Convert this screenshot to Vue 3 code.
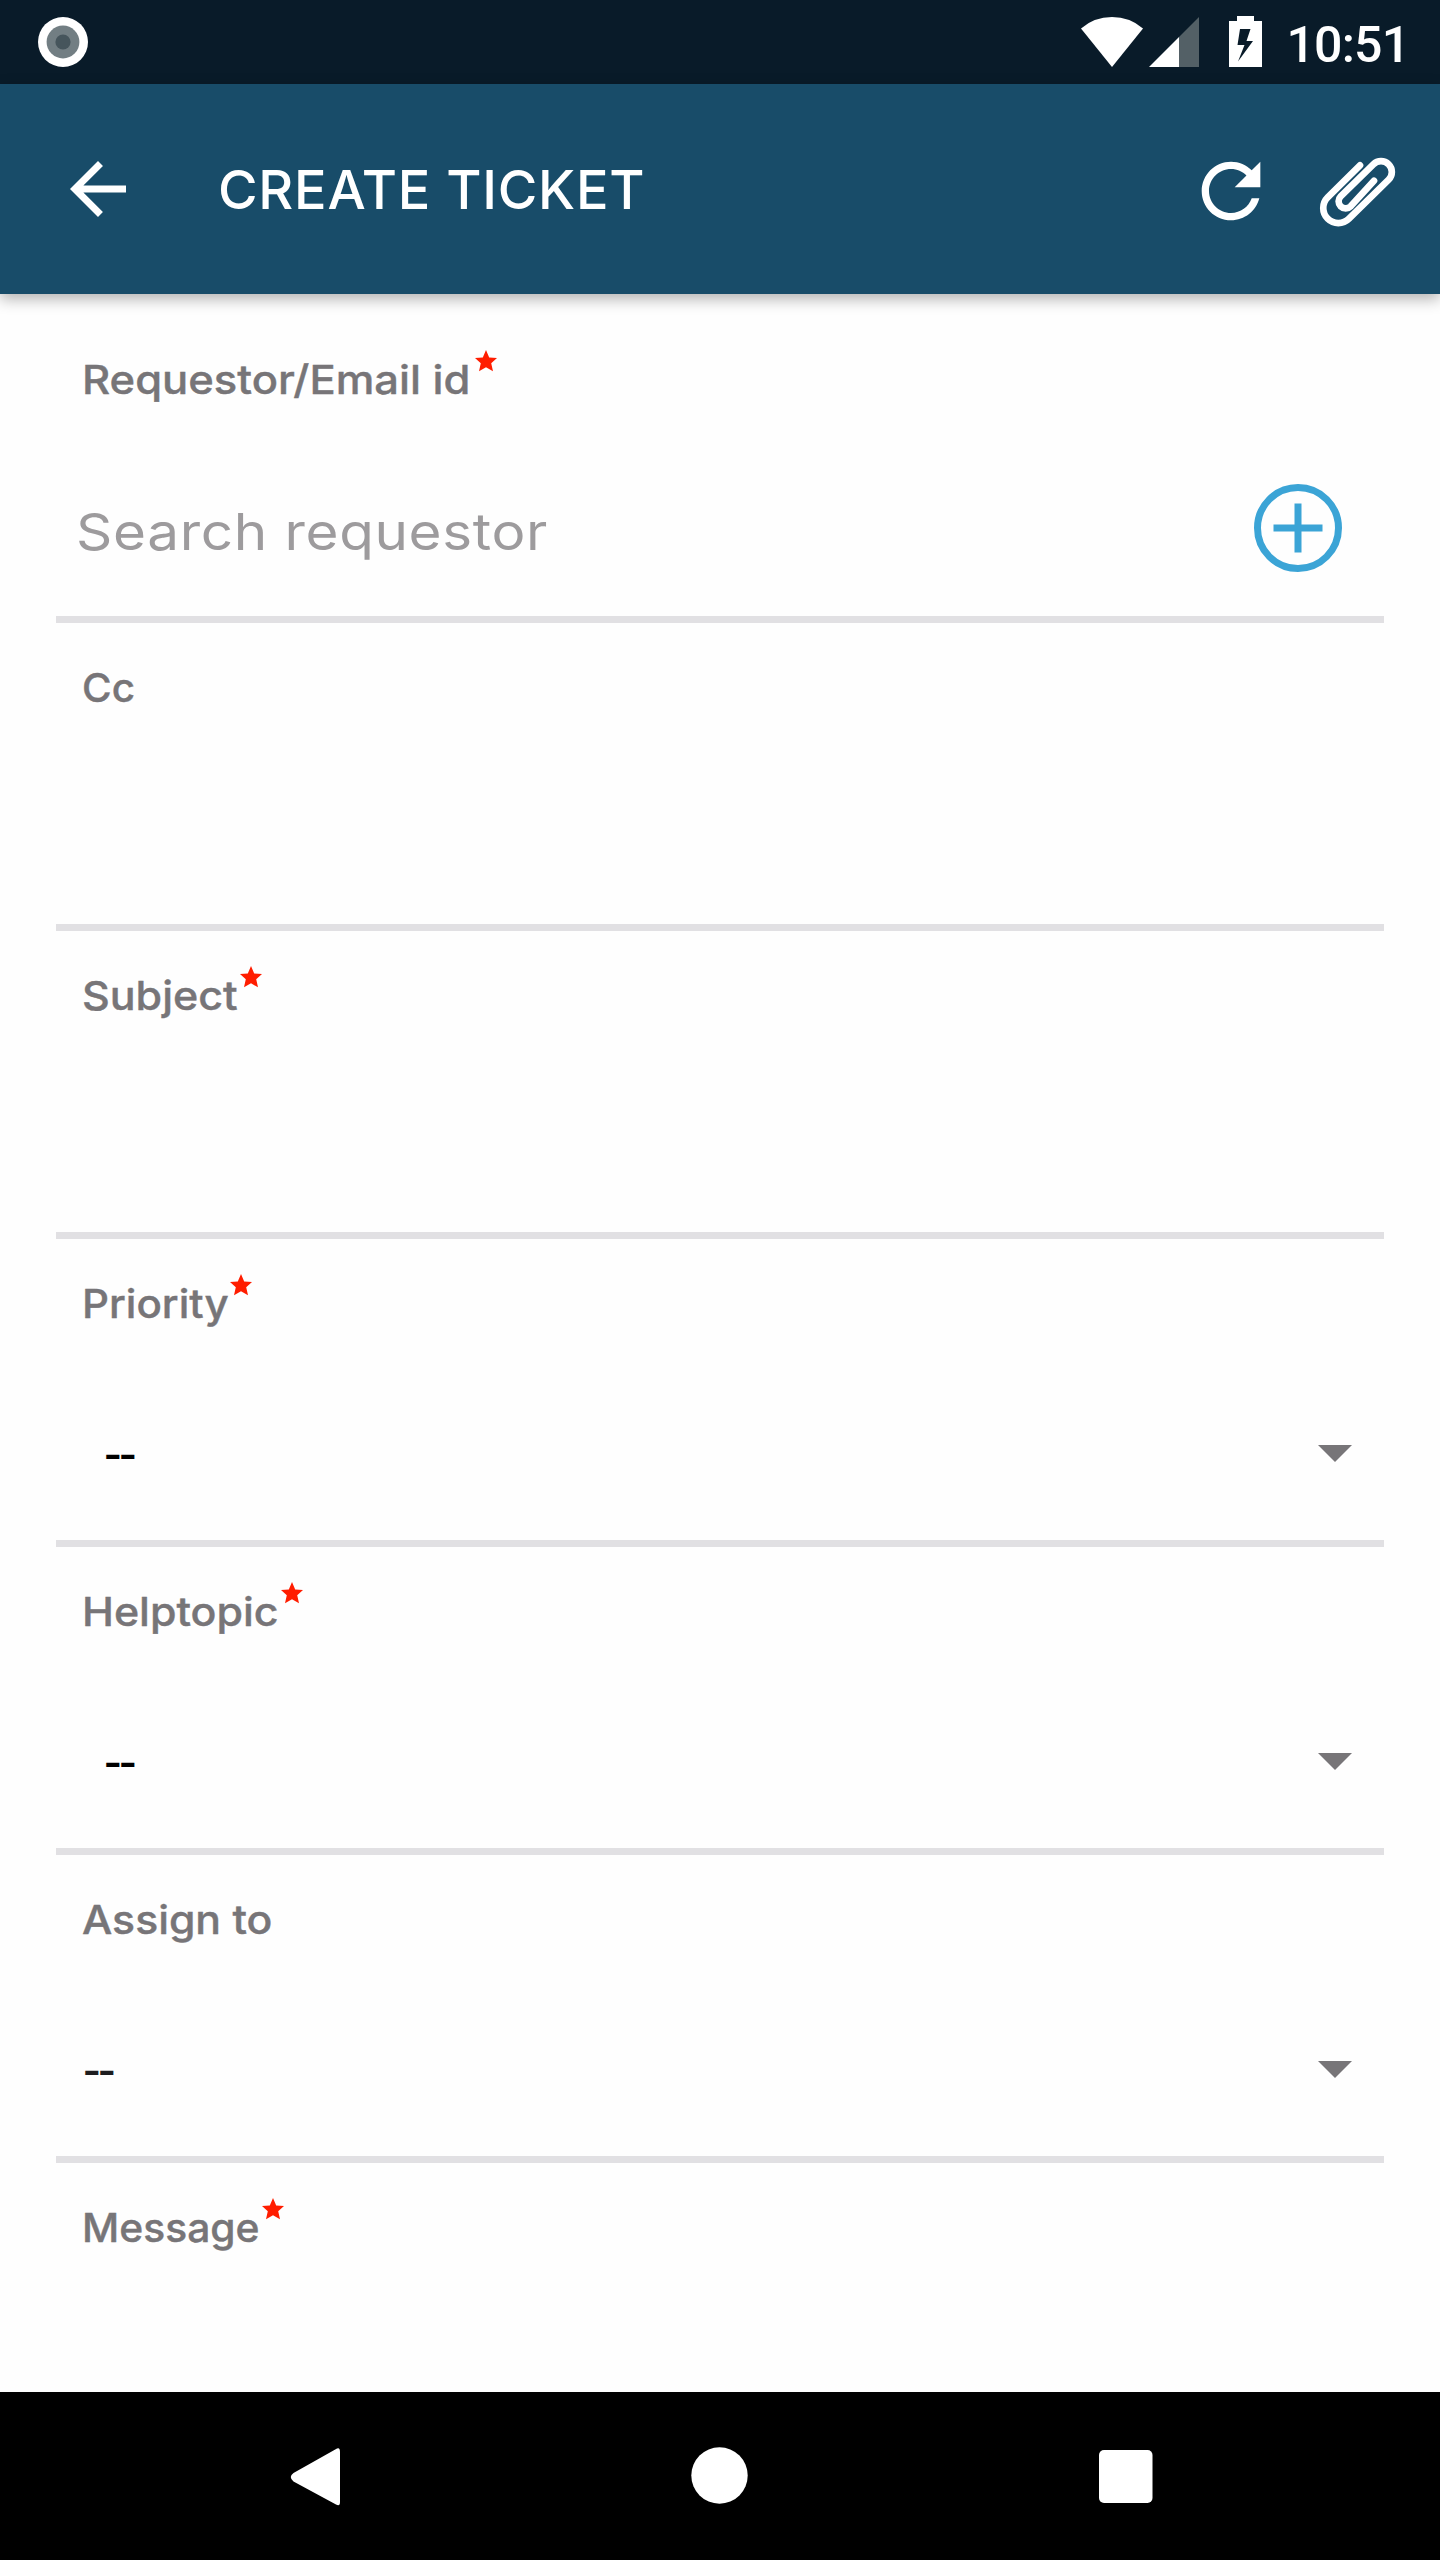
<script setup>
// stretch widens the label glyphs; gap is the distance to the required star
const fields = [
  { label: 'Requestor/Email id', required: true, kind: 'search', stretch: 1.088, gap: 36.5 },
  { label: 'Cc', required: false, kind: 'text', stretch: 1.01, gap: 0 },
  { label: 'Subject', required: true, kind: 'text', stretch: 1.074, gap: 13.3 },
  { label: 'Priority', required: true, kind: 'select', stretch: 1.052, gap: 9.5 },
  { label: 'Helptopic', required: true, kind: 'select', stretch: 1.072, gap: 16.5 },
  { label: 'Assign to', required: false, kind: 'select', flush: true, stretch: 1.068, gap: 0 },
  { label: 'Message', required: true, kind: 'text', stretch: 1.02, gap: 6 },
]
</script>

<template>
  <div class="screen">
    <div class="status">
      <svg class="record" width="52" height="52" viewBox="0 0 52 52">
        <circle cx="26" cy="26" r="25" fill="#fff" />
        <circle cx="26" cy="26" r="16.4" fill="#727e83" />
        <circle cx="26" cy="26" r="7.6" fill="#46555c" />
      </svg>
      <div class="tray">
        <svg width="184" height="52" viewBox="1080 16 184 52">
          <path d="M1081 28.500Q1094 17 1112 17T1143 28.500L1112 67Z" fill="#fff" />
          <path d="M1199 17V67H1179V37Z" fill="#536066" />
          <path d="M1179 37V67H1149Z" fill="#fff" />
          <path
            fill="#fff"
            fill-rule="evenodd"
            d="M1237 16h17v5h8v46h-33V21h8zM1240 29L1237.500 45H1244.500L1238 61.500L1253 41H1246.500L1250.500 29Z"
          />
        </svg>
        <span class="clock">10:51</span>
      </div>
    </div>

    <header class="bar">
      <svg width="84" height="84" viewBox="0 0 24 24" fill="#fff">
        <path d="M20 11H7.830l5.590-5.590L12 4l-8 8 8 8 1.410-1.410L7.830 13H20v-2z" />
      </svg>
      <h1>CREATE TICKET</h1>
      <svg class="refresh" width="88" height="88" viewBox="0 0 24 24" fill="#fff">
        <path
          d="M17.650 6.350C16.200 4.900 14.210 4 12 4c-4.420 0-7.990 3.580-7.990 8s3.570 8 7.990 8c3.730 0 6.840-2.550 7.730-6h-2.080c-.82 2.330-3.040 4-5.650 4-3.310 0-6-2.690-6-6s2.690-6 6-6c1.660 0 3.140.69 4.220 1.780L13 11h7V4l-2.350 2.350z"
        />
      </svg>
      <svg class="clip" width="96" height="88" viewBox="0 0 288 264">
        <path
          d="M150 52L53 148A45 45 0 0 0 117 212L236 95A32 32 0 0 0 190 49L92 145A21 21 0 0 0 122 175L192 98"
          fill="none"
          stroke="#fff"
          stroke-width="20"
          stroke-linecap="round"
          stroke-linejoin="round"
        />
      </svg>
    </header>

    <main class="form">
      <section v-for="f in fields" :key="f.label" class="field">
        <div class="label">
          <span class="name" :style="{ transform: `scaleX(${f.stretch})` }">{{ f.label }}</span>
          <svg
            v-if="f.required"
            class="star"
            :style="{ marginLeft: f.gap + 'px' }"
            width="22"
            height="22"
            viewBox="0 0 22 22"
          >
            <path
              d="M11 0L14.200 7.400L22 8L16.200 13.300L18 21.300L11 17.300L4 21.300L5.800 13.300L0 8L7.800 7.400Z"
              fill="#ff1d00"
            />
          </svg>
        </div>
        <div v-if="f.kind === 'search'" class="control search">
          <span class="placeholder">Search requestor</span>
          <svg class="add" width="88" height="88" viewBox="0 0 88 88">
            <circle cx="44" cy="44" r="40.500" fill="none" stroke="#3ba4d6" stroke-width="7" />
            <path d="M19.500 44h49M44 19.500v49" stroke="#3ba4d6" stroke-width="7" />
          </svg>
        </div>
        <div v-if="f.kind === 'select'" class="control select" :class="{ flush: f.flush }">
          <span class="value">--</span>
          <svg class="caret" width="34" height="17" viewBox="0 0 34 17">
            <path d="M0 0h34L17 17z" fill="#777578" />
          </svg>
        </div>
      </section>
    </main>

    <nav class="nav">
      <svg width="1440" height="168" viewBox="0 0 1440 168" fill="#fff">
        <path d="M337 56.500Q340 55 340 60V110Q340 115 336 112.500L293.500 89.500Q288 85 293.500 81Z" />
        <circle cx="719.500" cy="83.500" r="28.200" />
        <rect x="1099" y="58" width="53.500" height="53" rx="5" />
      </svg>
    </nav>
  </div>
</template>

<style scoped>
.screen {
  width: 1440px;
  height: 2560px;
  overflow: hidden;
  display: flex;
  flex-direction: column;
  background: #fefefe;
  font-family: Inter, sans-serif;
}
.status {
  flex: none;
  height: 84px;
  box-sizing: border-box;
  padding: 0 0 0 37px;
  display: flex;
  align-items: center;
  justify-content: space-between;
  background: #091b29;
  color: #fff;
}
.tray {
  display: flex;
  align-items: center;
  width: 360px;
}
.clock {
  font: 500 50px/56px Roboto, sans-serif;
  letter-spacing: -0.8px;
  margin: 5px 0 0 22.5px;
}
.bar {
  flex: none;
  height: 210px;
  box-sizing: border-box;
  padding: 0 34px 0 56px;
  background: #184c69;
  color: #fff;
  display: flex;
  align-items: center;
  box-shadow: 0 5px 14px rgba(0, 0, 0, 0.3);
}
h1 {
  font-size: 54px;
  line-height: 64px;
  font-weight: 500;
  letter-spacing: 0.75px;
  margin: 1px auto 0 78px;
}
.refresh { margin: 4px 35px 0 0; }
.clip { margin-top: 6px; }
.form {
  flex: 1;
  min-height: 0;
  overflow: hidden;
  padding: 21px 56px 0;
}
.field {
  height: 301px;
  overflow: hidden;
  border-bottom: 7px solid #e1e0e3;
}
.label {
  display: flex;
  align-items: flex-start;
  padding: 41px 0 0 25.5px;
  font-size: 40px;
  line-height: 48px;
  font-weight: 500;
  color: #777578;
}
.name {
  transform-origin: left center;
  -webkit-text-stroke: 0.4px #777578;
}
.star { margin-top: -6px; }
.control {
  display: flex;
  align-items: center;
  justify-content: space-between;
  height: 170px;
  margin-top: 42px;
}
.search {
  padding: 0 42px 0 20px;
  font-size: 51px;
  color: #9d9b9d;
}
.placeholder {
  letter-spacing: 0.6px;
  transform: scaleX(1.11);
  transform-origin: left center;
}
.add { margin-bottom: 6px; }
.select {
  padding: 0 32px 0 47.5px;
  font-size: 40px;
  font-weight: 600;
  letter-spacing: -3.5px;
  color: #000;
}
.value { margin-top: -1px; }
.flush { padding-left: 26.5px; color: #1d1d1f; }
.caret { margin-bottom: 4px; }
.nav {
  flex: none;
  height: 168px;
  background: #000;
}
.nav svg { display: block; }
</style>
